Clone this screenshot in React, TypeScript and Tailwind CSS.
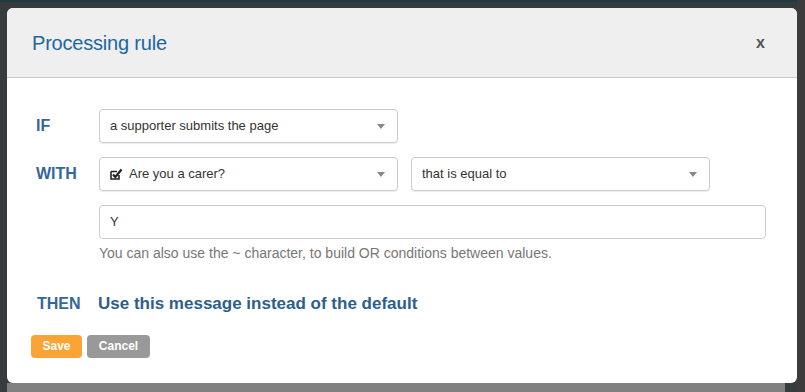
import React from "react";

function Caret() {
    return (
        <svg width="8" height="5" viewBox="0 0 8 5" className="shrink-0">
            <path d="M0 0h8L4 5z" fill="#888" />
        </svg>
    );
}

function CheckSquare() {
    return (
        <svg width="13" height="12" viewBox="0 0 13 12" className="shrink-0">
            <path d="M1 3.5h6M1 3.5v7.5h8V7" stroke="#222" strokeWidth="1.6" fill="none" />
            <path d="M3 6.5l2.3 2.5L11.5 1.5" stroke="#222" strokeWidth="2.2" fill="none" />
        </svg>
    );
}

function Select({ children, className }: { children: React.ReactNode; className?: string }) {
    return (
        <div
            className={
                "h-[34px] w-[299px] flex items-center justify-between rounded border border-[#ccc] bg-white pl-[10px] pr-[12px] text-[13px] text-[#333] shadow-[0_1px_1px_rgba(0,0,0,0.08)] " +
                (className ?? "")
            }
        >
            <div className="flex items-center gap-[6px]">{children}</div>
            <Caret />
        </div>
    );
}

export default function App() {
    return (
        <div
            className="w-[805px] h-[392px] bg-[#363b3c] relative overflow-hidden"
            style={{ fontFamily: '"Liberation Sans", Arial, sans-serif' }}
        >
            {/* page strips under the overlay */}
            <div className="absolute top-0 left-0 w-full h-[2px] bg-[#1c3a44]" />
            <div className="absolute bottom-0 left-[7px] w-[778px] h-[9px] bg-[#808080]" />
            <div className="absolute right-0 top-0 h-full w-[8px] bg-[#3c3c3c]" />

            <div className="absolute left-[7px] top-[8px] w-[790px] h-[375px] bg-white rounded-[6px] overflow-hidden flex flex-col">
                {/* Header */}
                <div className="h-[70px] shrink-0 bg-[#efefef] border-b border-[#c8c8c8] flex items-center justify-between pl-[25px] pr-[32px]">
                    <h2 className="text-[20px] text-[#1d67a0] tracking-[-0.2px]">Processing rule</h2>
                    <span className="text-[16px] font-bold text-[#555]">x</span>
                </div>

                {/* Body */}
                <div className="flex flex-col pt-[31px] pl-[29px] pr-[30px]">
                    <div className="flex items-center">
                        <span className="w-[63px] text-[16px] font-bold text-[#336799]">IF</span>
                        <Select>a supporter submits the page</Select>
                    </div>

                    <div className="flex items-center mt-[14px]">
                        <span className="w-[63px] text-[16px] font-bold text-[#336799]">WITH</span>
                        <Select>
                            <CheckSquare />
                            <span>Are you a carer?</span>
                        </Select>
                        <Select className="ml-[13px]">that is equal to</Select>
                    </div>

                    <div className="ml-[63px] mt-[14px]">
                        <div className="h-[34px] w-[667px] flex items-center rounded border border-[#ccc] bg-white px-[10px] text-[13px] text-[#333]">
                            Y
                        </div>
                        <p className="mt-[4px] text-[14px] text-[#777]">
                            You can also use the ~ character, to build OR conditions between values.
                        </p>
                    </div>

                    <div className="flex items-center mt-[27px]">
                        <span className="w-[62px] text-[16px] font-bold text-[#336799] pl-[1px]">THEN</span>
                        <span className="text-[17px] font-bold text-[#2d5f8c]">Use this message instead of the default</span>
                    </div>
                </div>

                {/* Footer */}
                <div className="flex gap-[5px] pl-[24px] mt-[18px]">
                    <button className="h-[23px] w-[51px] rounded-[4px] bg-[#f9a434] text-white text-[12px] font-bold">Save</button>
                    <button className="h-[23px] w-[63px] rounded-[4px] bg-[#999] text-white text-[12px] font-bold">Cancel</button>
                </div>
            </div>
        </div>
    );
}
